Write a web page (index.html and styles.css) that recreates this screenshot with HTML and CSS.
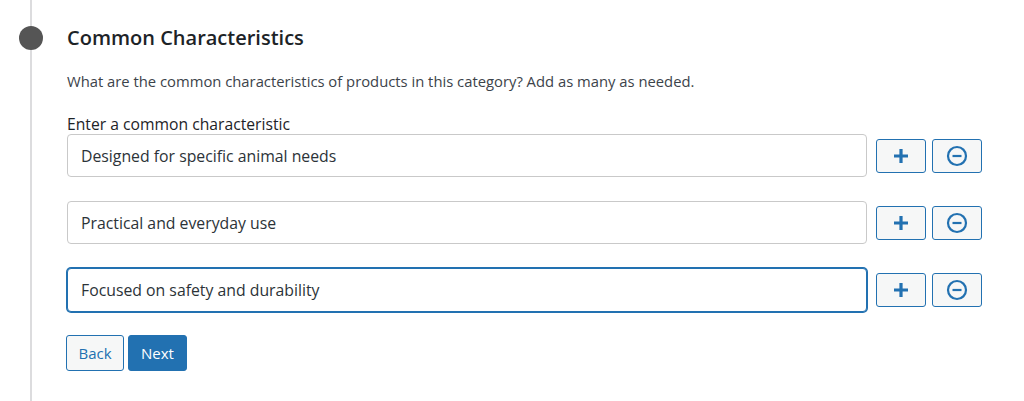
FILE: index.html
```html
<!DOCTYPE html>
<html>
<head>
<meta charset="utf-8">
<link rel="stylesheet" href="styles.css">
</head>
<body>
<div class="timeline">
  <div class="step">
    <span class="dot"></span>
    <h2 class="title">Common Characteristics</h2>
    <p class="desc">What are the common characteristics of products in this category? Add as many as needed.</p>
    <label class="label">Enter a common characteristic</label>
    <div class="rows">
      <div class="row">
        <input class="field" type="text" value="Designed for specific animal needs">
        <button class="icon-btn" type="button" aria-label="Add"><svg width="18" height="18" viewBox="0 0 18 18"><path d="M9 2v14M2 9h14" stroke="currentColor" stroke-width="3.2" fill="none"/></svg></button>
        <button class="icon-btn" type="button" aria-label="Remove"><svg width="22" height="22" viewBox="0 0 22 22"><circle cx="11" cy="11" r="9" stroke="currentColor" stroke-width="2.2" fill="none"/><path d="M6.5 11h9" stroke="currentColor" stroke-width="2.2"/></svg></button>
      </div>
      <div class="row">
        <input class="field" type="text" value="Practical and everyday use">
        <button class="icon-btn" type="button" aria-label="Add"><svg width="18" height="18" viewBox="0 0 18 18"><path d="M9 2v14M2 9h14" stroke="currentColor" stroke-width="3.2" fill="none"/></svg></button>
        <button class="icon-btn" type="button" aria-label="Remove"><svg width="22" height="22" viewBox="0 0 22 22"><circle cx="11" cy="11" r="9" stroke="currentColor" stroke-width="2.2" fill="none"/><path d="M6.5 11h9" stroke="currentColor" stroke-width="2.2"/></svg></button>
      </div>
      <div class="row">
        <input class="field focused" type="text" value="Focused on safety and durability">
        <button class="icon-btn" type="button" aria-label="Add"><svg width="18" height="18" viewBox="0 0 18 18"><path d="M9 2v14M2 9h14" stroke="currentColor" stroke-width="3.2" fill="none"/></svg></button>
        <button class="icon-btn" type="button" aria-label="Remove"><svg width="22" height="22" viewBox="0 0 22 22"><circle cx="11" cy="11" r="9" stroke="currentColor" stroke-width="2.2" fill="none"/><path d="M6.5 11h9" stroke="currentColor" stroke-width="2.2"/></svg></button>
      </div>
    </div>
    <div class="actions">
      <button class="btn btn-secondary" type="button">Back</button>
      <button class="btn btn-primary" type="button">Next</button>
    </div>
  </div>
</div>
</body>
</html>
```
FILE: styles.css
```css
html, body {
  margin: 0;
  padding: 0;
  background: #fff;
  font-family: "Open Sans", "Noto Sans", sans-serif;
  color: #1d2327;
}
.timeline {
  margin-left: 30px;
  border-left: 2px solid #dcdcde;
  min-height: 401px;
}
.step {
  position: relative;
  padding: 24px 42px 30px 35px;
}
.dot {
  position: absolute;
  left: -13px;
  top: 26px;
  width: 24px;
  height: 24px;
  border-radius: 50%;
  background: #555;
}
.title {
  margin: 0;
  font-size: 20px;
  font-weight: 600;
  line-height: 28px;
  color: #1d2327;
}
.desc {
  margin: 19px 0 0;
  font-size: 14.8px;
  line-height: 20px;
  color: #3c434a;
}
.label {
  display: block;
  margin-top: 23px;
  font-size: 15.7px;
  line-height: 20px;
  color: #1d2327;
}
.rows {
  display: flex;
  flex-direction: column;
  gap: 24px;
}
.row {
  display: flex;
  align-items: center;
  gap: 6px;
}
.field {
  flex: 1;
  height: 43px;
  box-sizing: border-box;
  border: 1px solid #c9c9c9;
  border-radius: 4px;
  padding: 0 13px;
  font-family: inherit;
  font-size: 15.8px;
  color: #2c3338;
  background: #fff;
  margin-right: 3px;
  outline: none;
}
.field.focused {
  border-color: #2271b1;
  box-shadow: 0 0 0 1px #2271b1;
  height: 44px;
}
.icon-btn {
  width: 50px;
  height: 34px;
  box-sizing: border-box;
  border: 1px solid #2271b1;
  border-radius: 3px;
  background: #f6f7f7;
  color: #2271b1;
  display: flex;
  align-items: center;
  justify-content: center;
  padding: 0;
}
.actions {
  display: flex;
  gap: 4px;
  margin-top: 23px;
  margin-left: -1px;
}
.btn {
  height: 36px;
  box-sizing: border-box;
  border-radius: 3px;
  font-family: inherit;
  font-size: 15px;
  padding: 0;
  border: 1px solid #2271b1;
}
.btn-secondary {
  background: #f6f7f7;
  color: #2271b1;
  width: 58px;
}
.btn-primary {
  background: #2271b1;
  color: #fff;
  width: 59px;
}
```
